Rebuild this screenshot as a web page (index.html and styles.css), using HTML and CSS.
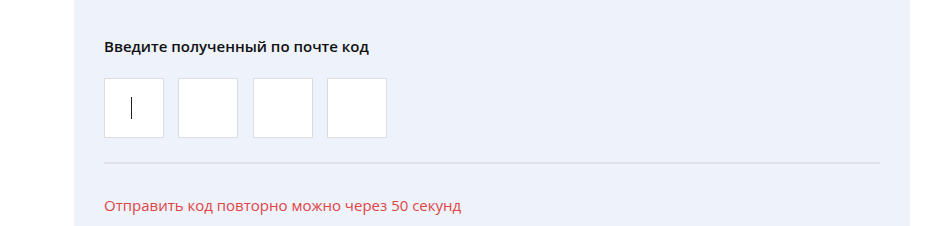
FILE: index.html
```html
<!DOCTYPE html>
<html lang="ru">
<head>
  <meta charset="UTF-8">
  <meta name="viewport" content="width=device-width, initial-scale=1.0">
  <title>Подтверждение почты</title>
  <link rel="stylesheet" href="styles.css">
</head>
<body>
  <div class="panel">
    <h2 class="code-title">Введите полученный по почте код</h2>
    <div class="code-inputs">
      <div class="code-box active"><span class="caret"></span></div>
      <div class="code-box"></div>
      <div class="code-box"></div>
      <div class="code-box"></div>
    </div>
    <hr class="divider">
    <p class="resend-note">Отправить код повторно можно через 50 секунд</p>
  </div>
</body>
</html>
```
FILE: styles.css
```css
body {
  margin: 0;
  padding: 0;
  background-color: #fff;
  font-family: "Open Sans", "Noto Sans", Arial, sans-serif;
}

.panel {
  width: 836px;
  height: 226px;
  margin-left: 74px;
  padding: 36px 30px 0 30px;
  box-sizing: border-box;
  background-color: #eef2fa;
}

.code-title {
  margin: 0;
  font-size: 15px;
  line-height: 20px;
  font-weight: 600;
  color: #111;
}

.code-inputs {
  display: flex;
  gap: 14.3px;
  margin-top: 22px;
}

.code-box {
  width: 60px;
  height: 60px;
  box-sizing: border-box;
  border: 1px solid #d9dce0;
  background-color: #fff;
  display: flex;
  align-items: center;
  padding-left: 26px;
}

.caret {
  display: block;
  width: 1px;
  height: 22px;
  background-color: #222;
}

.divider {
  margin: 24px 0 0 0;
  border: none;
  height: 2px;
  background-color: #dfe3e9;
}

.resend-note {
  margin: 31px 0 0 0;
  font-size: 15px;
  line-height: 20px;
  color: #e04545;
}
```
